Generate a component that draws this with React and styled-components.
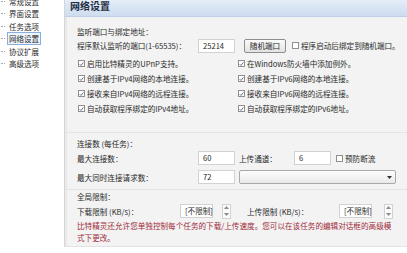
import React from 'react'
import styled, { createGlobalStyle } from 'styled-components'

const Global = createGlobalStyle`
body{
margin:0;
background:#fff;
font-family:"Noto Sans CJK SC","Liberation Sans",sans-serif;
color:#2a2a2a;
}
*{box-sizing:border-box;}
`;
const Page = styled.div`
display:flex;
width:407px;
height:253px;
overflow:hidden;
`;
const Tree = styled.div`
width:64px;
flex-shrink:0;
display:flex;
flex-direction:column;
margin-top:-5px;
font-size:7.5px;
`;
const TreeItem = styled.div`
height:12.5px;
display:flex;
align-items:center;
white-space:nowrap;
&::before{
content:"";
width:4px;
margin:0 2px 0 1px;
border-top:1px dotted #aaa;
}
`;
const TreeLabel = styled.span`
padding:0 1px;
line-height:11px;
border:1px solid ${p => p.active ? '#86aee0' : 'transparent'};
background:${p => p.active ? '#eef4fc' : 'transparent'};
`;
const Panel = styled.div`
flex:1;
height:247px;
background:#f3f3f3;
border-left:1px solid #d6d6d6;
border-bottom:1px solid #e2e2e2;
box-shadow:inset 2px 0 0 #e8e8e8;
display:flex;
flex-direction:column;
font-size:7.6px;
`;
const Header = styled.div`
height:17px;
flex-shrink:0;
background:linear-gradient(#e4edf8,#cddcef);
border-bottom:1px solid #bfd0e6;
padding-left:5px;
font-size:10px;
font-weight:bold;
color:#1f2f45;
line-height:12px;
`;
const Content = styled.div`
padding:0 4px 0 12px;
display:flex;
flex-direction:column;
white-space:nowrap;
`;
const Text = styled.div`
height:12px;
line-height:12px;
margin-top:${p => p.mt || 0}px;
`;
const Row = styled.div`
display:flex;
align-items:center;
height:${p => p.h || 14}px;
margin-top:${p => p.mt || 0}px;
`;
const Label = styled.span`
width:${p => p.w}px;
flex-shrink:0;
`;
const Input = styled.div`
width:${p => p.w || 37}px;
height:14px;
flex-shrink:0;
background:#fff;
border:1px solid #d2d2d2;
padding-left:4px;
line-height:12px;
margin-right:${p => p.mr || 0}px;
`;
const Button = styled.div`
width:42px;
height:14px;
margin:0 5px 0 9px;
border:1px solid #8e8e8e;
border-radius:2px;
background:linear-gradient(#fbfbfb,#e2e2e2);
text-align:center;
line-height:12px;
`;
const Box = styled.span`
width:7px;
height:7px;
flex-shrink:0;
border:1px solid #8f8f8f;
background:#fff;
margin-right:2px;
display:flex;
align-items:center;
justify-content:center;
`;
const CheckWrap = styled.div`
display:flex;
align-items:center;
height:15px;
padding-left:1px;
`;
const Grid = styled.div`
display:grid;
grid-template-columns:160px 1fr;
margin-top:3px;
`;
const Sep = styled.div`
height:1px;
background:#e4e4e4;
margin:${p => p.m};
`;
const Select = styled.div`
width:157px;
height:14px;
border:1px solid #a9a9a9;
border-radius:2px;
background:linear-gradient(#fdfdfd,#e9e9e9);
display:flex;
justify-content:flex-end;
align-items:center;
padding-right:3px;
`;
const Spin = styled.div`
width:9px;
height:15px;
flex-shrink:0;
border:1px solid #d2d2d2;
background:#fafafa;
display:flex;
flex-direction:column;
align-items:center;
justify-content:space-around;
margin-right:${p => p.mr || 0}px;
`;
const Note = styled.div`
color:#a02a3a;
line-height:12px;
margin-top:2px;
`;

function Check({ on, children }) {
    return (
        <CheckWrap>
            <Box>
                {on && (
                    <svg width="6" height="6" viewBox="0 0 6 6">
                        <path d="M0.8 3.2 L2.4 4.8 L5.3 1" fill="none" stroke="#4a5a70" strokeWidth="1" />
                    </svg>
                )}
            </Box>
            <span>{children}</span>
        </CheckWrap>
    )
}

function Arrows() {
    return (
        <>
            <svg width="5" height="3" viewBox="0 0 5 3"><path d="M0 3 L2.5 0 L5 3Z" fill="#8a8a8a" /></svg>
            <svg width="5" height="3" viewBox="0 0 5 3"><path d="M0 0 L2.5 3 L5 0Z" fill="#8a8a8a" /></svg>
        </>
    )
}

const treeItems = ['常规设置', '界面设置', '任务选项', '网络设置', '协议扩展', '高级选项'];

export default function App() {
    return (
        <Page>
            <Global />
            <Tree>
                {treeItems.map(t => (
                    <TreeItem key={t}><TreeLabel active={t === '网络设置'}>{t}</TreeLabel></TreeItem>
                ))}
            </Tree>
            <Panel>
                <Header>网络设置</Header>
                <Content>
                    <Text mt={9}>监听端口与绑定地址：</Text>
                    <Row h={15}>
                        <Label w={121}>程序默认监听的端口(1-65535)：</Label>
                        <Input>25214</Input>
                        <Button>随机端口</Button>
                        <Check>程序启动后绑定到随机端口。</Check>
                    </Row>
                    <Grid>
                        <Check on>启用比特精灵的UPnP支持。</Check>
                        <Check on>在Windows防火墙中添加例外。</Check>
                        <Check on>创建基于IPv4网络的本地连接。</Check>
                        <Check on>创建基于IPv6网络的本地连接。</Check>
                        <Check on>接收来自IPv4网络的远程连接。</Check>
                        <Check on>接收来自IPv6网络的远程连接。</Check>
                        <Check on>自动获取程序绑定的IPv4地址。</Check>
                        <Check on>自动获取程序绑定的IPv6地址。</Check>
                    </Grid>
                    <Sep m="16px -4px 0 -12px" />
                    <Text mt={5}>连接数 (每任务)：</Text>
                    <Row mt={1}>
                        <Label w={121}>最大连接数：</Label>
                        <Input mr={4}>60</Input>
                        <Label w={55}>上传通道：</Label>
                        <Input mr={4}>6</Input>
                        <Check>预防断流</Check>
                    </Row>
                    <Row mt={5}>
                        <Label w={121}>最大同时连接请求数：</Label>
                        <Input mr={4}>72</Input>
                        <Select>
                            <svg width="5" height="3" viewBox="0 0 5 3"><path d="M0 0 L2.5 3 L5 0Z" fill="#333" /></svg>
                        </Select>
                    </Row>
                    <Sep m="5px -4px 0 -12px" />
                    <Text mt={1}>全局限制：</Text>
                    <Row mt={1}>
                        <Label w={103}>下载限制 (KB/s)：</Label>
                        <Input w={33} mr={9}>[不限制]</Input>
                        <Spin mr={16}><Arrows /></Spin>
                        <Label w={92}>上传限制 (KB/s)：</Label>
                        <Input w={33} mr={12}>[不限制]</Input>
                        <Spin><Arrows /></Spin>
                    </Row>
                    <Note>
                        比特精灵还允许您单独控制每个任务的下载/上传速度。您可以在该任务的编辑对话框的高级模<br />式下更改。
                    </Note>
                </Content>
            </Panel>
        </Page>
    )
}
